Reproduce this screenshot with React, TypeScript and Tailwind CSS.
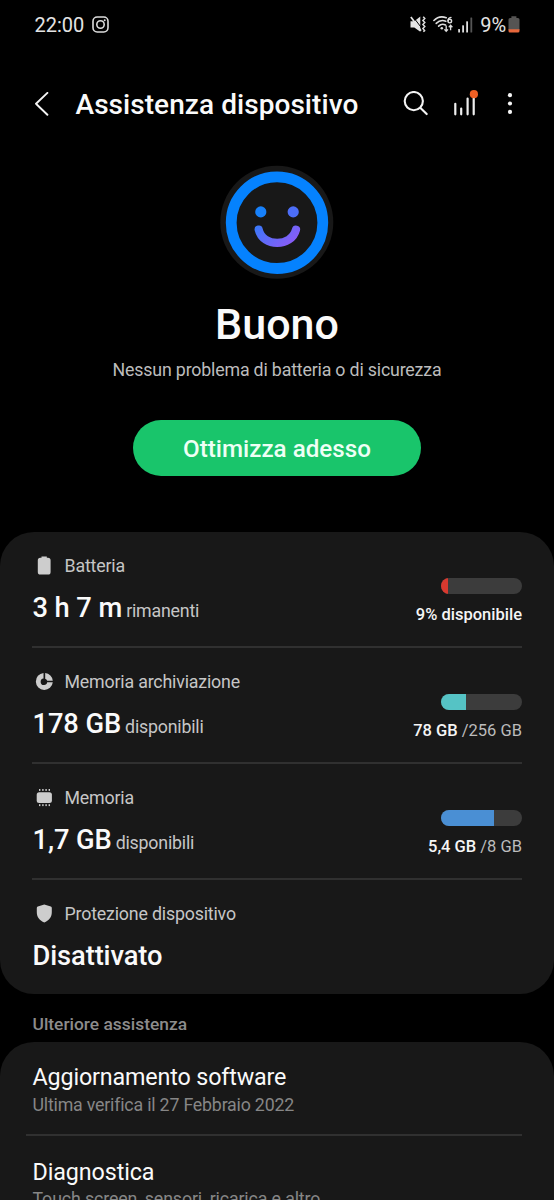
import type { ReactNode } from "react";

function InstagramIcon() {
  return (
    <svg className="h-[17px] w-[17px]" viewBox="0 0 17 17" fill="none" stroke="#dcdcdc">
      <rect x="1" y="1" width="15" height="15" rx="4.2" strokeWidth="1.6" />
      <circle cx="8.5" cy="8.5" r="3.7" strokeWidth="1.6" />
      <circle cx="12.7" cy="4.3" r="1" fill="#dcdcdc" stroke="none" />
    </svg>
  );
}

function MuteIcon() {
  return (
    <svg className="h-[17px] w-4" viewBox="0 0 16 17" fill="none">
      <path d="M0.5 5.3H4.3L10.3 0.6V15.8L4.3 11.4H0.5Z" fill="#e4e4e4" />
      <path d="M2.6 0.2L11.8 12.2" stroke="#000" strokeWidth="1" />
      <path d="M0.9 0.9L11 14.8" stroke="#e4e4e4" strokeWidth="1.7" />
      <path
        d="M13.2 0.8L14.8 2.6L12.9 4.6L14.8 6.6L12.9 8.6L14.8 10.6L12.9 12.6L14.6 14.6L13.4 15.8"
        stroke="#dcdcdc"
        strokeWidth="1.5"
      />
    </svg>
  );
}

function WifiIcon() {
  return (
    <svg className="h-[17px] w-5" viewBox="0 0 20 17" fill="none" stroke="#dedede" strokeLinecap="round">
      <path d="M0.9 4.5C4.2 1.1 9 0.2 13.2 1.7" strokeWidth="1.6" />
      <path d="M3.2 7.4C5.9 4.6 9.6 4 12.8 5.2" strokeWidth="1.6" />
      <path d="M5.6 10.1C7.6 8.1 10.3 7.8 12.5 9" strokeWidth="1.6" />
      <circle cx="8.8" cy="12.3" r="1.3" fill="#dedede" stroke="none" />
      <path d="M18 1.4C15.8 1.7 15 3.2 15 4.9" strokeWidth="1.4" />
      <circle cx="16.8" cy="5.1" r="1.8" strokeWidth="1.4" />
      <path d="M13.2 9.6V15M11.4 13.4L13.2 15.3L15 13.4" strokeWidth="1.3" strokeLinecap="butt" />
      <path d="M17.6 14.2V9.4M15.8 11.2L17.6 9.3L19.4 11.2" strokeWidth="1.3" strokeLinecap="butt" />
    </svg>
  );
}

function SignalIcon() {
  return (
    <svg className="h-4 w-[15px]" viewBox="0 0 15 16" fill="#dedede">
      <rect x="0.2" y="12" width="1.8" height="3.4" rx="0.5" />
      <rect x="4.2" y="8.2" width="1.8" height="7.2" rx="0.5" />
      <rect x="8.2" y="4.2" width="1.8" height="11.2" rx="0.5" />
      <rect x="12.4" y="0.4" width="1.8" height="15" rx="0.5" fill="#555" />
    </svg>
  );
}

function StatusBatteryIcon() {
  return (
    <svg className="h-[17px] w-3" viewBox="0 0 12 17">
      <path d="M3.4 0.3H8.4V2H9.9Q11.5 2 11.5 3.6V14H0.5V3.6Q0.5 2 2.1 2H3.4Z" fill="#555453" />
      <path d="M0.5 13.2H11.5V15Q11.5 16.6 9.9 16.6H2.1Q0.5 16.6 0.5 15Z" fill="#e8683c" />
    </svg>
  );
}

function SmileyIcon() {
  return (
    <svg className="h-[114px] w-[114px]" viewBox="0 0 114 114" fill="none">
      <defs>
        <linearGradient id="face" x1="36" y1="44" x2="70" y2="82" gradientUnits="userSpaceOnUse">
          <stop offset="0" stopColor="#1c83fa" />
          <stop offset="0.5" stopColor="#576ef8" />
          <stop offset="1" stopColor="#8b5bf6" />
        </linearGradient>
      </defs>
      <circle cx="56.8" cy="57.3" r="56.5" fill="#181818" />
      <circle cx="57" cy="57.7" r="45.8" stroke="#0582fe" strokeWidth="10.8" />
      <circle cx="40.8" cy="46.9" r="5.6" fill="#1781fb" />
      <circle cx="73.2" cy="46.9" r="5.6" fill="#4c6ef8" />
      <path d="M38.7 64.6C42.8 82.4 71.4 82.4 76 64.6" stroke="url(#face)" strokeWidth="8.2" strokeLinecap="round" />
    </svg>
  );
}

function BatteryIcon() {
  return (
    <svg className="h-6 w-6" viewBox="0 0 24 24" fill="#cdcdcd">
      <path d="M9.5 2.5H14.8V3.7H16Q18.6 3.7 18.6 6.3V17.9Q18.6 20.5 16 20.5H8.3Q5.8 20.5 5.8 17.9V6.3Q5.8 3.7 8.3 3.7H9.5Z" />
    </svg>
  );
}

function StorageIcon() {
  return (
    <svg className="h-6 w-6" viewBox="0 0 24 24" fill="#cdcdcd">
      <path d="M11.5 3V8.5A3.3 3.3 0 1 0 15.2 12.3H20.8A8.5 8.5 0 1 1 11.5 3Z" />
      <path d="M13.2 3A8.5 8.5 0 0 1 20.8 10.7H15.2A3.3 3.3 0 0 0 13.2 8.7Z" />
    </svg>
  );
}

function MemoryIcon() {
  const pins = [7, 10.2, 13.4, 16.6];
  return (
    <svg className="h-6 w-6" viewBox="0 0 24 24" fill="#cdcdcd">
      <rect x="4.7" y="6.2" width="15.2" height="10.7" rx="2.5" />
      {pins.map((x) => (
        <g key={x}>
          <rect x={x} y="3" width="1.4" height="1.9" />
          <rect x={x} y="18.2" width="1.4" height="1.9" />
        </g>
      ))}
    </svg>
  );
}

function ShieldIcon() {
  return (
    <svg className="h-6 w-6" viewBox="0 0 24 24" fill="#cdcdcd">
      <path d="M12.3 2.5L18.8 4.5Q19.8 4.8 19.8 5.9V10.3C19.8 15.3 16.8 18.5 12.3 20.5C7.8 18.5 4.8 15.3 4.8 10.3V5.9Q4.8 4.8 5.8 4.5Z" />
    </svg>
  );
}

type RowProps = {
  icon: ReactNode;
  label: string;
  value: string;
  unit?: string;
  children?: ReactNode;
  last?: boolean;
};

function StatRow({ icon, label, value, unit, children, last }: RowProps) {
  return (
    <section
      className={
        last
          ? "flex h-[114px] justify-between"
          : "flex h-[116px] justify-between border-b-2 border-[#303030]"
      }
    >
      <div className="pt-[22px]">
        <div className="flex h-6 items-center gap-[8.5px] text-[17.8px] tracking-[-0.18px] text-[#c6c6c6]">
          {icon}
          <span className="pt-px">{label}</span>
        </div>
        <div className="mt-[13px] flex h-[34px] items-baseline gap-[4px] pl-[0.5px] leading-[34px]">
          <span className="text-[27.3px] font-medium tracking-[-0.1px] text-[#fafafa]">{value}</span>
          {unit && <span className="text-[17.8px] tracking-[-0.2px] text-[#c6c6c6]">{unit}</span>}
        </div>
      </div>
      {children && <div className="flex flex-col items-end pt-[46px]">{children}</div>}
    </section>
  );
}

function Meter({ fill }: { fill: string }) {
  return (
    <div className="h-4 w-[81px] overflow-hidden rounded-full bg-[#3c3c3c]">
      <div className={`h-full ${fill}`} />
    </div>
  );
}

export default function App() {
  return (
    <main className="flex h-[1200px] w-full flex-col overflow-hidden bg-black font-[Roboto,sans-serif] text-white">
      <header className="flex h-[49px] shrink-0 items-center justify-between pl-[34.5px] pr-[34px] text-[20px] text-[#e4e4e4]">
        <div className="flex items-center gap-2">
          <span>22:00</span>
          <InstagramIcon />
        </div>
        <div className="flex items-center">
          <MuteIcon />
          <span className="ml-[7px]">
            <WifiIcon />
          </span>
          <span className="ml-[5px]">
            <SignalIcon />
          </span>
          <span className="ml-[7px] tracking-[-0.1px]">9%</span>
          <span className="ml-[2px]">
            <StatusBatteryIcon />
          </span>
        </div>
      </header>

      <nav className="flex h-[111px] shrink-0 items-center pl-[34px] pr-[38px]">
        <svg className="h-[26px] w-4" viewBox="0 0 16 26" fill="none" stroke="#f4f4f4" strokeWidth="1.9" strokeLinecap="round" strokeLinejoin="round">
          <path d="M13.4 0.9L2 11.7L13.4 22.8" />
        </svg>
        <h1 className="ml-[25.5px] text-[28px] font-medium leading-8 tracking-[0.06px] text-[#fafafa]">Assistenza dispositivo</h1>
        <div className="ml-auto flex items-center">
          <svg className="h-7 w-7" viewBox="0 0 28 28" fill="none" stroke="#f4f4f4" strokeWidth="2.1" strokeLinecap="round">
            <circle cx="11.8" cy="10.1" r="9.1" />
            <path d="M18.5 16.9L24.7 23.1" />
          </svg>
          <svg className="ml-[21px] h-[30px] w-[30px]" viewBox="0 0 30 30" fill="none" stroke="#eeeeee" strokeWidth="2.2" strokeLinecap="round">
            <path d="M4.3 13.8V24.3M10.2 18.5V24.3M16.6 8.6V24.3M22.7 6V24.3" />
            <circle cx="22.9" cy="4.2" r="4.1" fill="#ed5f24" stroke="none" />
          </svg>
          <svg className="ml-[23px] h-6 w-3" viewBox="0 0 12 24" fill="#f4f4f4">
            <circle cx="6" cy="2.2" r="2.1" />
            <circle cx="6" cy="10.5" r="2.1" />
            <circle cx="6" cy="18.9" r="2.1" />
          </svg>
        </div>
      </nav>

      <section className="flex h-[372px] shrink-0 flex-col items-center pt-[5px]">
        <SmileyIcon />
        <h2 className="mt-[21px] text-[43px] font-medium leading-[48px] text-[#fafafa]">Buono</h2>
        <p className="mt-[10px] text-[17.8px] leading-6 tracking-[-0.18px] text-[#bcbcbc]">Nessun problema di batteria o di sicurezza</p>
        <button className="mt-[38px] h-14 w-[288px] rounded-full bg-[#19c56b] pt-[2px] text-[24.2px] font-medium text-[#eefff5]">
          Ottimizza adesso
        </button>
      </section>

      <div className="h-[462px] shrink-0 rounded-[34px] bg-[#181818] px-8">
        <StatRow icon={<BatteryIcon />} label="Batteria" value="3 h 7 m" unit="rimanenti">
          <Meter fill="w-[7px] bg-[#d8392f]" />
          <p className="mt-[9px] text-[16.5px] font-medium leading-6 text-[#f5f5f5]">9% disponibile</p>
        </StatRow>
        <StatRow icon={<StorageIcon />} label="Memoria archiviazione" value="178 GB" unit="disponibili">
          <Meter fill="w-[25px] bg-[#55c3c5]" />
          <p className="mt-[9px] text-[16.5px] leading-6 text-[#bcbcbc]">
            <span className="font-medium text-[#f5f5f5]">78 GB</span> /256 GB
          </p>
        </StatRow>
        <StatRow icon={<MemoryIcon />} label="Memoria" value="1,7 GB" unit="disponibili">
          <Meter fill="w-[53px] bg-[#4a8fd4]" />
          <p className="mt-[9px] text-[16.5px] leading-6 text-[#bcbcbc]">
            <span className="font-medium text-[#f5f5f5]">5,4 GB</span> /8 GB
          </p>
        </StatRow>
        <StatRow icon={<ShieldIcon />} label="Protezione dispositivo" value="Disattivato" last />
      </div>

      <h3 className="h-12 shrink-0 pl-[32.5px] pt-[18px] text-[17.4px] font-medium leading-6 text-[#8c8c8c]">Ulteriore assistenza</h3>

      <div className="shrink-0 rounded-t-[34px] bg-[#181818] pl-[26px] pr-8">
        <section className="h-[94px] border-b-2 border-[#303030] pl-[6.5px] pt-[19px]">
          <h4 className="text-[23.3px] leading-8 tracking-[-0.15px] text-[#fafafa]">Aggiornamento software</h4>
          <p className="text-[17.8px] leading-[23px] tracking-[-0.2px] text-[#868686]">Ultima verifica il 27 Febbraio 2022</p>
        </section>
        <section className="h-[94px] pl-[6.5px] pt-5">
          <h4 className="text-[23.3px] leading-8 tracking-[-0.1px] text-[#fafafa]">Diagnostica</h4>
          <p className="text-[17.8px] leading-[22px] tracking-[-0.13px] text-[#868686]">Touch screen, sensori, ricarica e altro</p>
        </section>
      </div>
    </main>
  );
}
